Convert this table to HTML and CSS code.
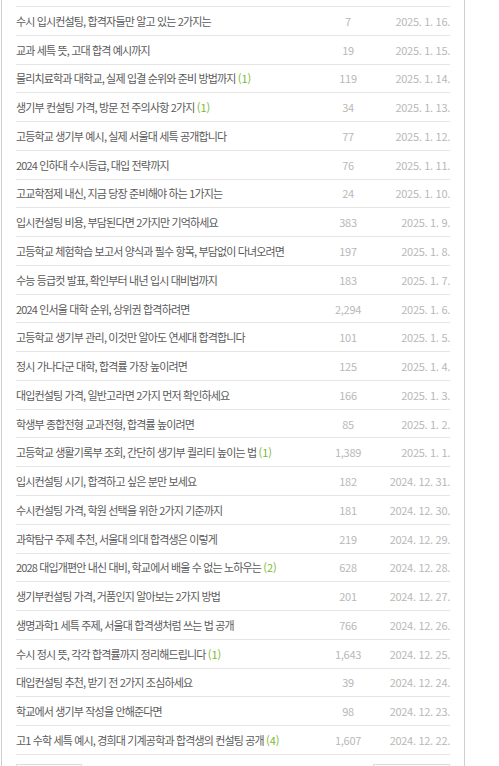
FILE: index.html
```html
<!DOCTYPE html>
<html lang="ko">
<head>
<meta charset="utf-8">
<link rel="stylesheet" href="styles.css">
</head>
<body>
<div class="page">
  <div class="panel">
    <ul class="list">
      <li class="row"><span class="title">수시 입시컨설팅, 합격자들만 알고 있는 2가지는</span><span class="cnt">7</span><span class="date">2025. 1. 16.</span></li>
      <li class="row"><span class="title">교과 세특 뜻, 고대 합격 예시까지</span><span class="cnt">19</span><span class="date">2025. 1. 15.</span></li>
      <li class="row"><span class="title">물리치료학과 대학교, 실제 입결 순위와 준비 방법까지 <em class="cmt">(1)</em></span><span class="cnt">119</span><span class="date">2025. 1. 14.</span></li>
      <li class="row"><span class="title">생기부 컨설팅 가격, 방문 전 주의사항 2가지 <em class="cmt">(1)</em></span><span class="cnt">34</span><span class="date">2025. 1. 13.</span></li>
      <li class="row"><span class="title">고등학교 생기부 예시, 실제 서울대 세특 공개합니다</span><span class="cnt">77</span><span class="date">2025. 1. 12.</span></li>
      <li class="row"><span class="title">2024 인하대 수시등급, 대입 전략까지</span><span class="cnt">76</span><span class="date">2025. 1. 11.</span></li>
      <li class="row"><span class="title">고교학점제 내신, 지금 당장 준비해야 하는 1가지는</span><span class="cnt">24</span><span class="date">2025. 1. 10.</span></li>
      <li class="row"><span class="title">입시컨설팅 비용, 부담된다면 2가지만 기억하세요</span><span class="cnt">383</span><span class="date">2025. 1. 9.</span></li>
      <li class="row"><span class="title">고등학교 체험학습 보고서 양식과 필수 항목, 부담없이 다녀오려면</span><span class="cnt">197</span><span class="date">2025. 1. 8.</span></li>
      <li class="row"><span class="title">수능 등급컷 발표, 확인부터 내년 입시 대비법까지</span><span class="cnt">183</span><span class="date">2025. 1. 7.</span></li>
      <li class="row"><span class="title">2024 인서울 대학 순위, 상위권 합격하려면</span><span class="cnt">2,294</span><span class="date">2025. 1. 6.</span></li>
      <li class="row"><span class="title">고등학교 생기부 관리, 이것만 알아도 연세대 합격합니다</span><span class="cnt">101</span><span class="date">2025. 1. 5.</span></li>
      <li class="row"><span class="title">정시 가나다군 대학, 합격률 가장 높이려면</span><span class="cnt">125</span><span class="date">2025. 1. 4.</span></li>
      <li class="row"><span class="title">대입컨설팅 가격, 일반고라면 2가지 먼저 확인하세요</span><span class="cnt">166</span><span class="date">2025. 1. 3.</span></li>
      <li class="row"><span class="title">학생부 종합전형 교과전형, 합격률 높이려면</span><span class="cnt">85</span><span class="date">2025. 1. 2.</span></li>
      <li class="row"><span class="title">고등학교 생활기록부 조회, 간단히 생기부 퀄리티 높이는 법 <em class="cmt">(1)</em></span><span class="cnt">1,389</span><span class="date">2025. 1. 1.</span></li>
      <li class="row"><span class="title">입시컨설팅 시기, 합격하고 싶은 분만 보세요</span><span class="cnt">182</span><span class="date">2024. 12. 31.</span></li>
      <li class="row"><span class="title">수시컨설팅 가격, 학원 선택을 위한 2가지 기준까지</span><span class="cnt">181</span><span class="date">2024. 12. 30.</span></li>
      <li class="row"><span class="title">과학탐구 주제 추천, 서울대 의대 합격생은 이렇게</span><span class="cnt">219</span><span class="date">2024. 12. 29.</span></li>
      <li class="row"><span class="title">2028 대입개편안 내신 대비, 학교에서 배울 수 없는 노하우는 <em class="cmt">(2)</em></span><span class="cnt">628</span><span class="date">2024. 12. 28.</span></li>
      <li class="row"><span class="title">생기부컨설팅 가격, 거품인지 알아보는 2가지 방법</span><span class="cnt">201</span><span class="date">2024. 12. 27.</span></li>
      <li class="row"><span class="title">생명과학1 세특 주제, 서울대 합격생처럼 쓰는 법 공개</span><span class="cnt">766</span><span class="date">2024. 12. 26.</span></li>
      <li class="row"><span class="title">수시 정시 뜻, 각각 합격률까지 정리해드립니다 <em class="cmt">(1)</em></span><span class="cnt">1,643</span><span class="date">2024. 12. 25.</span></li>
      <li class="row"><span class="title">대입컨설팅 추천, 받기 전 2가지 조심하세요</span><span class="cnt">39</span><span class="date">2024. 12. 24.</span></li>
      <li class="row"><span class="title">학교에서 생기부 작성을 안해준다면</span><span class="cnt">98</span><span class="date">2024. 12. 23.</span></li>
      <li class="row"><span class="title">고1 수학 세특 예시, 경희대 기계공학과 합격생의 컨설팅 공개 <em class="cmt">(4)</em></span><span class="cnt">1,607</span><span class="date">2024. 12. 22.</span></li>
    </ul>
    <div class="actions">
      <button class="btn btn-left" aria-label="목록"></button>
      <button class="btn btn-right" aria-label="글쓰기"></button>
    </div>
  </div>
</div>
</body>
</html>
```

FILE: styles.css
```css
* { box-sizing: border-box; }
html, body { margin: 0; padding: 0; background: #fff; }
body {
  font-family: "Noto Sans CJK KR", "Noto Sans", sans-serif;
  color: #5a5a5a;
  overflow: hidden;
}
.page {
  width: 464px;
  margin-left: 1px;
  border-left: 1px solid #cfcfcf;
  border-right: 1px solid #cfcfcf;
  min-height: 900px;
}
.panel {
  padding: 6px 14px 0 14px;
}
.list {
  list-style: none;
  margin: 0;
  padding: 0;
  border-top: 1px solid #e6e6e6;
}
.row {
  display: grid;
  grid-template-columns: 1fr 60px 72px;
  align-items: center;
  height: 28.77px;
  border-bottom: 1px solid #e6e6e6;
  font-size: 11px;
}
.title {
  white-space: nowrap;
  overflow: hidden;
  letter-spacing: -0.85px;
  color: #5a5a5a;
}
.cmt {
  font-style: normal;
  color: #7cb82f;
  letter-spacing: 0;
}
.cnt {
  text-align: center;
  color: #b8b8b8;
  letter-spacing: -0.3px;
}
.date {
  text-align: right;
  color: #b8b8b8;
  letter-spacing: -0.3px;
}
.actions {
  display: flex;
  justify-content: space-between;
  margin-top: 9px;
}
.btn {
  height: 28px;
  border: 1px solid #ddd;
  background: #fff;
  padding: 0;
}
.btn-left { width: 66px; }
.btn-right { width: 77px; }
```
